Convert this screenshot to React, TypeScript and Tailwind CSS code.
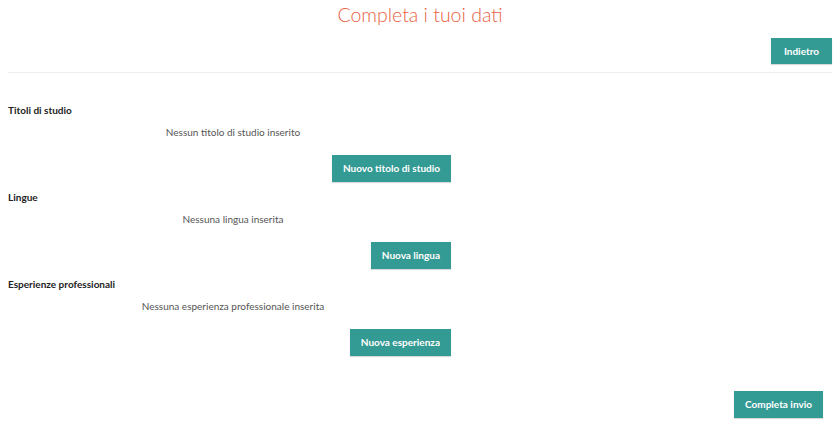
import React from 'react';

const sections = [
  { title: 'Titoli di studio', empty: 'Nessun titolo di studio inserito', action: 'Nuovo titolo di studio' },
  { title: 'Lingue', empty: 'Nessuna lingua inserita', action: 'Nuova lingua' },
  { title: 'Esperienze professionali', empty: 'Nessuna esperienza professionale inserita', action: 'Nuova esperienza' },
];

function TealButton({ children }: { children: React.ReactNode }) {
  return (
    <button className="h-[27px] px-[11px] bg-[#339a94] text-white text-[10px] font-bold shadow-[0_1px_1px_rgba(0,0,0,0.15)]">
      {children}
    </button>
  );
}

export default function App() {
  return (
    <div className="bg-white min-h-[424px] px-2 text-[#333]" style={{ fontFamily: 'Lato, "Open Sans", sans-serif' }}>
      <h1 className="text-center text-[19.5px] leading-[30px] font-light text-[#e8623f]">Completa i tuoi dati</h1>

      <div className="flex justify-end mt-[8px] pr-[-1px]">
        <button className="h-[26px] px-[13px] bg-[#339a94] text-white text-[10px] font-bold shadow-[0_1px_1px_rgba(0,0,0,0.15)]">Indietro</button>
      </div>

      <div className="mt-[8px] border-t border-[#eeeeee]" />

      <div className="w-[443px] pt-[30px]">
        {sections.map((s, i) => (
          <div key={s.title} className={i === 0 ? '' : 'mt-[8px]'}>
            <h3 className="text-[10px] leading-[14px] font-bold text-[#222]">{s.title}</h3>
            <p className="mt-[8px] text-center text-[10px] leading-[14px] text-[#555] pl-[7px]">{s.empty}</p>
            <div className="flex justify-end mt-[16px]">
              <TealButton>{s.action}</TealButton>
            </div>
          </div>
        ))}
      </div>

      <div className="flex justify-end mt-[35px] pr-[9px]">
        <TealButton>Completa invio</TealButton>
      </div>
    </div>
  );
}
